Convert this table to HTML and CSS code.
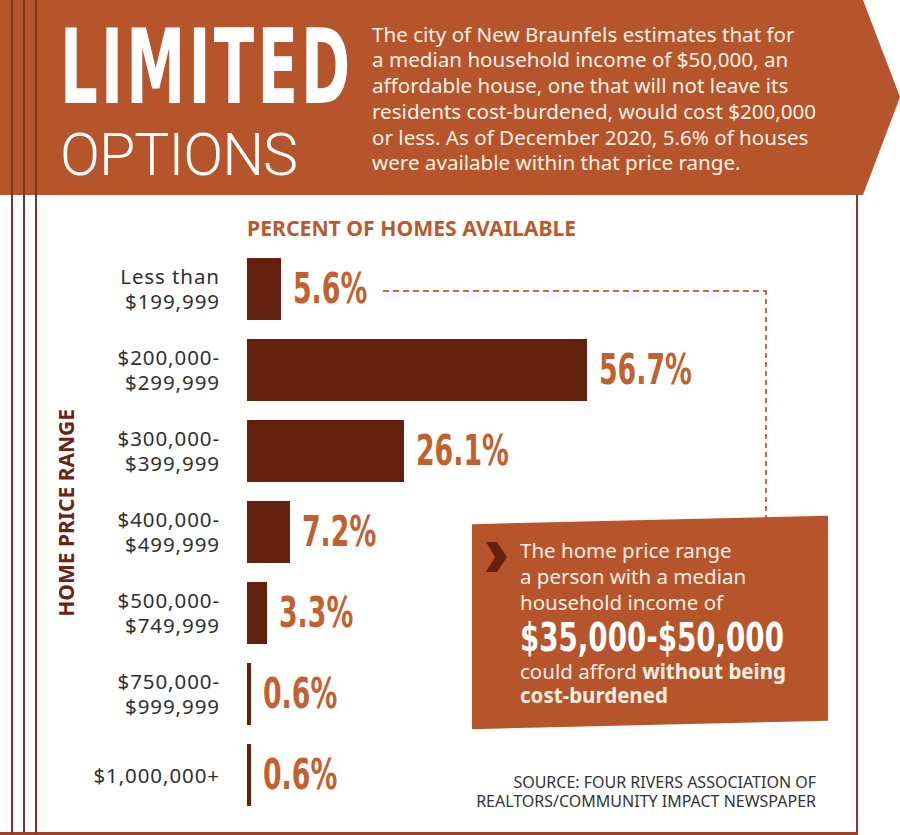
FILE: index.html
```html
<!DOCTYPE html>
<html lang="en">
<head>
<meta charset="utf-8">
<title>Limited Options</title>
<link rel="stylesheet" href="styles.css">
</head>
<body>
<div class="page">
  <header class="banner">
    <div class="title">
      <h1 class="title-main">LIMITED</h1>
      <div class="title-sub">OPTIONS</div>
    </div>
    <p class="intro">The city of New Braunfels estimates that for<br>a median household income of $50,000, an<br>affordable house, one that will not leave its<br>residents cost-burdened, would cost $200,000<br>or less. As of December 2020, 5.6% of houses<br>were available within that price range.</p>
  </header>
  <main class="main">
    <div class="axis">HOME PRICE RANGE</div>
    <div class="chart">
      <div class="chart-title">PERCENT OF HOMES AVAILABLE</div>

      <div class="label r1">Less than<br>$199,999</div>
      <div class="cell r1"><span class="bar" style="width:33.6px"></span><span class="value">5.6%</span></div>

      <div class="label r2">$200,000-<br>$299,999</div>
      <div class="cell r2"><span class="bar" style="width:340.2px"></span><span class="value">56.7%</span></div>

      <div class="label r3">$300,000-<br>$399,999</div>
      <div class="cell r3"><span class="bar" style="width:156.6px"></span><span class="value">26.1%</span></div>

      <div class="label r4">$400,000-<br>$499,999</div>
      <div class="cell r4"><span class="bar" style="width:43.2px"></span><span class="value">7.2%</span></div>

      <div class="label r5">$500,000-<br>$749,999</div>
      <div class="cell r5"><span class="bar" style="width:19.8px"></span><span class="value">3.3%</span></div>

      <div class="label r6">$750,000-<br>$999,999</div>
      <div class="cell r6"><span class="bar" style="width:3.6px"></span><span class="value">0.6%</span></div>

      <div class="label r7">$1,000,000+</div>
      <div class="cell r7"><span class="bar" style="width:3.6px"></span><span class="value">0.6%</span></div>

      <div class="connector"></div>

      <div class="callout">
        <svg class="chev" viewBox="0 0 21 30" aria-hidden="true"><polygon points="0,0 11,0 21,15 11,30 0,30 9,15" fill="#66200f"/></svg>
        <div class="callout-text">
          <p class="c-lines">The home price range<br>a person with a median<br>household income of</p>
          <p class="big">$35,000-$50,000</p>
          <p class="tail">could afford <b>without being<br>cost-burdened</b></p>
        </div>
      </div>

      <div class="source">SOURCE: FOUR RIVERS ASSOCIATION OF<br>REALTORS/COMMUNITY IMPACT NEWSPAPER</div>
    </div>
  </main>
  <div class="rails"><span></span><span></span><span></span></div>
</div>
</body>
</html>
```

FILE: styles.css
```css
* { box-sizing: border-box; margin: 0; padding: 0; }
html, body { width: 900px; height: 835px; }
body {
  background: #fff;
  font-family: "Noto Sans", "DejaVu Sans", sans-serif;
  color: #2f2f2f;
  overflow: hidden;
}
.page { position: relative; width: 900px; height: 835px; }

/* Banner */
.banner {
  display: flex;
  height: 195px;
  padding-left: 60px;
  background: #b6552b;
  clip-path: polygon(0 0, 863px 0, 900px 97px, 863px 195px, 0 195px);
}
.title { width: 312px; flex: none; color: #fff; }
.title-main {
  margin-top: 27.5px;
  font-family: "DejaVu Sans Condensed", "DejaVu Sans", sans-serif;
  font-weight: 700;
  font-size: 103px;
  line-height: 78px;
  letter-spacing: 5px;
  white-space: nowrap;
  transform: scaleX(0.64);
  transform-origin: left center;
}
.title-sub {
  margin-top: 27.5px;
  font-family: Roboto, sans-serif;
  font-weight: 300;
  font-size: 59px;
  line-height: 44px;
  letter-spacing: -1px;
}
.intro {
  margin-top: 21.5px;
  font-size: 20.6px;
  line-height: 25.8px;
  color: #fdf1e7;
  white-space: nowrap;
}

/* Main frame */
.main {
  display: flex;
  width: 858px;
  height: 640px;
  padding-left: 56px;
  border-right: 2px solid #8a3a26;
  border-bottom: 3px solid #9a4229;
}
.axis {
  align-self: flex-start;
  width: 21px;
  margin-top: 214px;
  writing-mode: vertical-rl;
  transform: rotate(180deg);
  font-weight: 700;
  font-size: 21px;
  line-height: 21px;
  color: #6a2413;
  white-space: nowrap;
}
.chart {
  flex: 1;
  display: grid;
  grid-template-columns: 142px 1fr;
  grid-template-rows: 22px repeat(7, 62px);
  column-gap: 28px;
  row-gap: 19px;
  align-content: start;
  padding-top: 22px;
}
.chart-title {
  grid-column: 2;
  grid-row: 1;
  font-weight: 700;
  font-size: 21.2px;
  line-height: 22px;
  color: #b85a2c;
  white-space: nowrap;
}
.r1 { grid-row: 2; }
.r2 { grid-row: 3; }
.r3 { grid-row: 4; }
.r4 { grid-row: 5; }
.r5 { grid-row: 6; }
.r6 { grid-row: 7; }
.r7 { grid-row: 8; }
.label {
  grid-column: 1;
  align-self: center;
  margin-right: -0.9px;
  text-align: right;
  font-size: 20.5px;
  line-height: 25px;
  letter-spacing: 0.9px;
  color: #2f2f2f;
  white-space: nowrap;
}
.cell {
  grid-column: 2;
  justify-self: start;
  display: flex;
  align-items: center;
}
.bar {
  display: block;
  flex: none;
  height: 62px;
  background: #65210f;
}
.value {
  display: block;
  margin-left: 12px;
  font-family: "DejaVu Sans Condensed", "DejaVu Sans", sans-serif;
  font-weight: 700;
  font-size: 42.5px;
  line-height: 1;
  color: #c0612f;
  white-space: nowrap;
  transform: scaleX(0.7);
  transform-origin: left center;
}

/* Connector */
.connector {
  grid-column: 2;
  grid-row: 2 / 6;
  align-self: start;
  justify-self: start;
  width: 384px;
  height: 240px;
  margin-top: 32px;
  margin-left: 136px;
  background:
    repeating-linear-gradient(to right, #c4693a 0 6px, transparent 6px 10px) left top / 100% 2px no-repeat,
    repeating-linear-gradient(to bottom, #c4693a 0 5px, transparent 5px 9px) right top / 2px 100% no-repeat;
}

/* Callout */
.callout {
  grid-column: 2;
  grid-row: 5 / 8;
  align-self: start;
  justify-self: end;
  position: relative;
  z-index: 1;
  display: flex;
  gap: 13px;
  width: 356px;
  height: 205px;
  margin-top: 19px;
  margin-right: 28px;
  padding: 17px 0 0 14px;
  color: #fcefe5;
  font-size: 20.5px;
  line-height: 26px;
}
.callout::before {
  content: "";
  position: absolute;
  inset: 0;
  z-index: -1;
  background: #b6552b;
  transform: skewY(-1.35deg);
}
.chev { flex: none; width: 21px; height: 30px; margin-top: 5px; }
.callout-text { white-space: nowrap; }
.big {
  margin-top: 1.8px;
  font-family: "DejaVu Sans Condensed", "DejaVu Sans", sans-serif;
  font-weight: 700;
  font-size: 38.5px;
  line-height: 42px;
  color: #fff;
  transform: scaleX(0.8);
  transform-origin: left center;
}
.tail { line-height: 24px; }
.tail b { font-weight: 700; }

/* Source */
.source {
  grid-column: 2;
  grid-row: 8;
  justify-self: end;
  align-self: end;
  margin-right: 40px;
  margin-bottom: -4px;
  text-align: right;
  font-size: 16px;
  line-height: 18.5px;
  color: #333;
  white-space: nowrap;
}

/* Decorative rails at left edge */
.rails {
  position: absolute;
  top: 0;
  left: 11px;
  height: 833px;
  display: flex;
  gap: 10px;
  pointer-events: none;
}
.rails span { display: block; width: 2px; background: #7e3322; }
```
